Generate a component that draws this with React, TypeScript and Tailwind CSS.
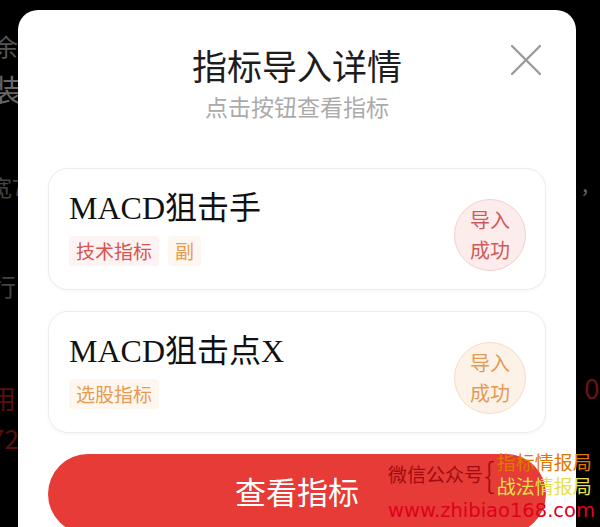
import React from "react";

const cjk = { fontFamily: '"Noto Sans CJK SC", "Noto Sans", sans-serif' };
const serif = { fontFamily: '"Liberation Serif", "Noto Sans CJK SC", serif' };

function Badge({ tone }: { tone: "red" | "orange" }) {
  const cls =
    tone === "red"
      ? "bg-[#fcecec] border-[#f2cfcf] text-[#cf5a5a]"
      : "bg-[#fdf2e8] border-[#f6dcc2] text-[#e39a55]";
  return (
    <div
      className={`w-[72px] h-[72px] mt-[12px] rounded-full border flex flex-col items-center justify-center text-[20px] leading-[30px] ${cls}`}
      style={cjk}
    >
      <span>导入</span>
      <span>成功</span>
    </div>
  );
}

function Tag({ text, tone }: { text: string; tone: "red" | "orange" }) {
  const cls =
    tone === "red" ? "bg-[#fdf3f3] text-[#d9534f]" : "bg-[#fef7ef] text-[#e69a52]";
  return (
    <span className={`px-[7px] h-[30px] flex items-center rounded-[4px] text-[19px] ${cls}`} style={cjk}>
      {text}
    </span>
  );
}

function Card({
  title,
  tags,
  tone,
}: {
  title: string;
  tags: { text: string; tone: "red" | "orange" }[];
  tone: "red" | "orange";
}) {
  return (
    <div className="h-[122px] rounded-[20px] border border-[#ececec] bg-white shadow-[0_1px_4px_rgba(0,0,0,0.04)] flex items-center pl-[20px] pr-[19px]">
      <div className="flex-1 flex flex-col -mt-[4px]">
        <div className="text-[32px] leading-[40px] text-[#111]" style={serif}>
          {title}
        </div>
        <div className="flex gap-[9px] mt-[8px]">
          {tags.map((t) => (
            <Tag key={t.text} text={t.text} tone={t.tone} />
          ))}
        </div>
      </div>
      <Badge tone={tone} />
    </div>
  );
}

export default function App() {
  return (
    <div className="w-[600px] h-[527px] bg-black relative overflow-hidden" style={cjk}>
      {/* background page text peeking out */}
      <div className="absolute left-[-6px] top-[28px] text-[24px] text-[#555]">余</div>
      <div className="absolute left-[-8px] top-[66px] text-[30px] text-[#666]">装</div>
      <div className="absolute left-[-10px] top-[170px] text-[22px] text-[#444]">宽7</div>
      <div className="absolute left-[-8px] top-[268px] text-[24px] text-[#444]">行</div>
      <div className="absolute left-[-10px] top-[378px] text-[26px] text-[#5a0f0f]">用</div>
      <div className="absolute left-[-10px] top-[418px] text-[26px] text-[#5a0f0f]">72</div>
      <div className="absolute left-[582px] top-[166px] text-[22px] text-[#666]">,</div>
      <div className="absolute left-[584px] top-[366px] text-[28px] text-[#6a1515]">0</div>

      {/* modal */}
      <div className="absolute left-[18px] top-[10px] w-[558px] h-[560px] bg-white rounded-[20px] px-[30px] pt-[32px]">
        <button className="absolute right-[34px] top-[34px] w-[32px] h-[32px] flex items-center justify-center">
          <svg width="30" height="30" viewBox="0 0 30 30">
            <path d="M1 1 L29 29 M29 1 L1 29" stroke="#9a9a9a" strokeWidth="2.4" strokeLinecap="round" />
          </svg>
        </button>
        <div className="text-center text-[35px] leading-[46px] text-[#1d1d1d]">指标导入详情</div>
        <div className="text-center text-[23px] leading-[30px] text-[#ababab] mt-[3px]">点击按钮查看指标</div>

        <div className="flex flex-col gap-[21px] mt-[47px]">
          <Card
            title="MACD狙击手"
            tone="red"
            tags={[
              { text: "技术指标", tone: "red" },
              { text: "副", tone: "orange" },
            ]}
          />
          <Card title="MACD狙击点X" tone="orange" tags={[{ text: "选股指标", tone: "orange" }]} />
        </div>

        <button className="mt-[21px] w-full h-[80px] rounded-full bg-[#e63b36] text-white text-[31px] flex items-center justify-center pb-[6px]">
          查看指标
        </button>
      </div>

      {/* watermark */}
      <div className="absolute left-[388px] top-[450px] flex flex-col" style={cjk}>
        <div className="flex items-center">
          <span className="text-[19px] text-[#a00d10]">微信公众号</span>
          <span className="text-[34px] leading-[40px] text-[#a00d10] font-light ml-[1px] mr-[2px]">{"{"}</span>
          <div className="flex flex-col text-[19px] leading-[24px]">
            <span className="text-[#e07800]">指标情报局</span>
            <span className="text-[#e5e04a]">战法情报局</span>
          </div>
        </div>
        <span className="text-[19.5px] leading-[24px] text-[#e0001a] mt-[1px]" style={{ fontFamily: '"DejaVu Sans", sans-serif' }}>
          www.zhibiao168.com
        </span>
      </div>
    </div>
  );
}
